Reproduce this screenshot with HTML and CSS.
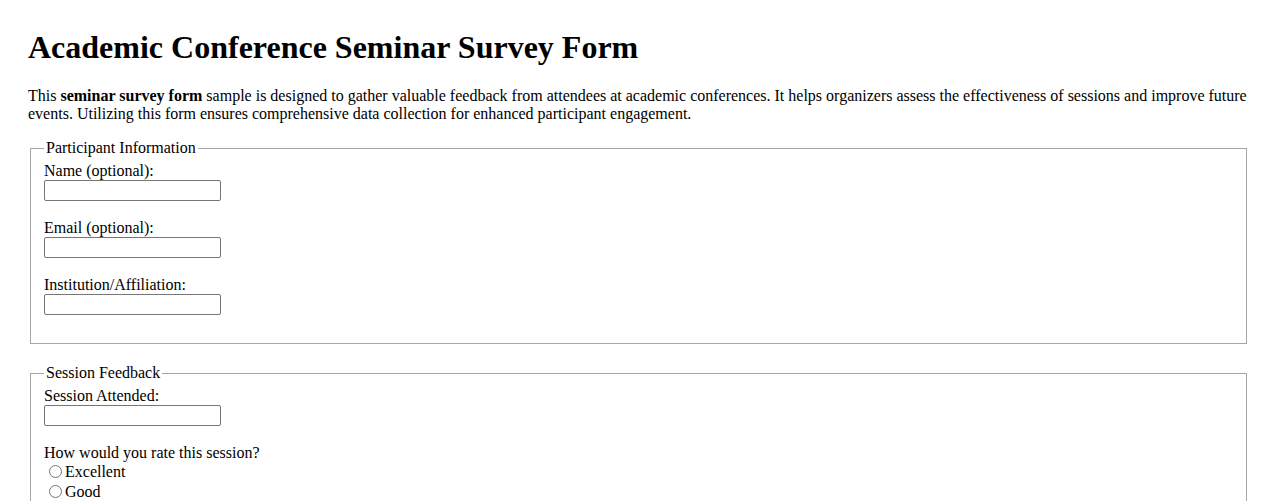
FILE: index.html
```html
<!DOCTYPE html>
<html lang="en">
<head>
<meta charset="utf-8">
<title>Academic Conference Seminar Survey Form</title>
<link rel="stylesheet" href="styles.css">
</head>
<body class="page">
<h1 class="title">Academic Conference Seminar Survey Form</h1>
<p class="intro">This <strong>seminar survey form</strong> sample is designed to gather valuable feedback from attendees at academic conferences. It helps organizers assess the effectiveness of sessions and improve future events. Utilizing this form ensures comprehensive data collection for enhanced participant engagement.</p>
<form class="survey">
<fieldset class="group">
<legend class="legend">Participant Information</legend>
<label class="label" for="name">Name (optional):</label><br>
<input class="field" type="text" id="name"><br><br>
<label class="label" for="email">Email (optional):</label><br>
<input class="field" type="email" id="email"><br><br>
<label class="label" for="inst">Institution/Affiliation:</label><br>
<input class="field" type="text" id="inst"><br><br>
</fieldset>
<fieldset class="group">
<legend class="legend">Session Feedback</legend>
<label class="label" for="session">Session Attended:</label><br>
<input class="field" type="text" id="session"><br><br>
<span class="label">How would you rate this session?</span><br>
<label class="option"><input class="radio" type="radio" name="rating" value="excellent">Excellent</label><br>
<label class="option"><input class="radio" type="radio" name="rating" value="good">Good</label><br>
<label class="option"><input class="radio" type="radio" name="rating" value="average">Average</label><br>
<label class="option"><input class="radio" type="radio" name="rating" value="poor">Poor</label><br><br>
</fieldset>
</form>
</body>
</html>
```
FILE: styles.css
```css
html, body {
  background: #ffffff;
}
.page {
  margin: 0;
  padding: 29px 29px 20px 28px;
  font-family: "Liberation Serif", "Times New Roman", serif;
  font-size: 16px;
  line-height: 18px;
  color: #000000;
}
.title {
  font-size: 32px;
  line-height: 37px;
  font-weight: bold;
  margin: 0 0 21px 0;
}
.intro {
  margin: 0 0 16px 0;
}
.survey {
  margin: 0;
}
.group {
  margin: 0 2px 20px 2px;
  padding: 5px 13px 10px 13px;
  border: 1px solid #a6a6a6;
}
.legend {
  padding: 0 2px;
}
.label {
  font-size: 16px;
}
.field {
  box-sizing: border-box;
  width: 177px;
  height: 21px;
  margin: 0;
  padding: 1px 2px;
  border: 1px solid #767676;
  border-radius: 2px;
  font-family: inherit;
  font-size: 13px;
  vertical-align: bottom;
  background: #ffffff;
}
.option {
  display: inline-block;
  line-height: 20px;
}
.radio {
  margin: 3px 3px 0 5px;
  width: 13px;
  height: 13px;
  vertical-align: -1px;
}
```
